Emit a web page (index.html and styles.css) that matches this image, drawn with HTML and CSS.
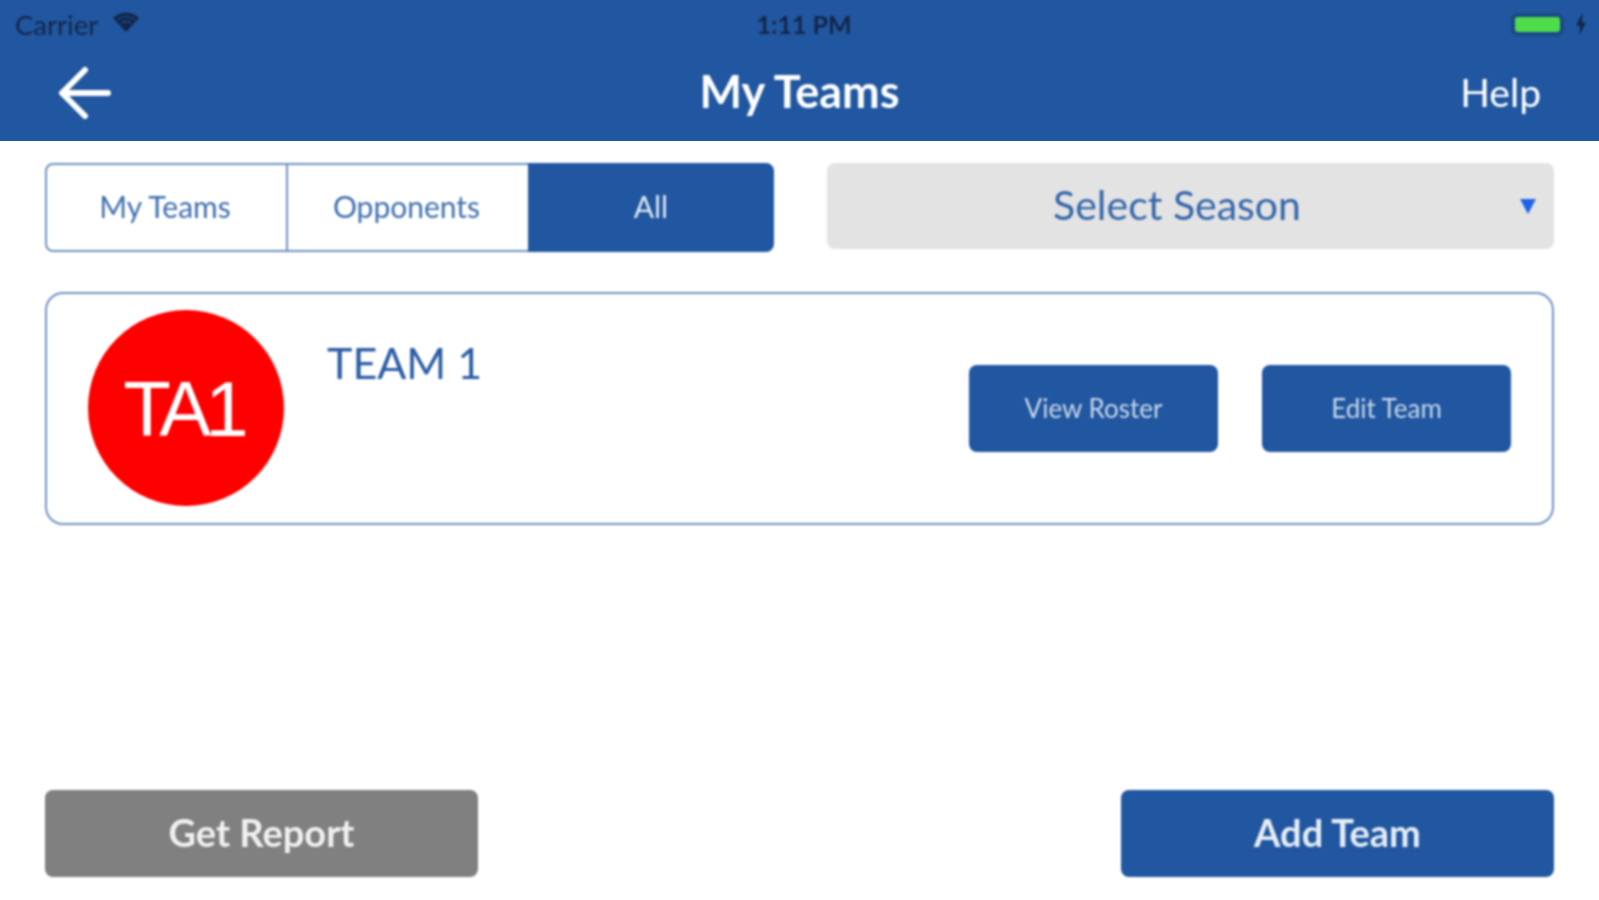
FILE: index.html
```html
<!DOCTYPE html>
<html lang="en">
<head>
    <meta charset="UTF-8">
    <meta name="viewport" content="width=device-width, initial-scale=1.0">
    <title>My Teams</title>
    <link rel="stylesheet" href="styles.css">
</head>
<body>
    <header class="top-bar">
        <div class="status-bar">
            <div class="status-left">
                <span>Carrier</span>
                <svg class="wifi" width="28" height="24" viewBox="0 0 28 24">
                    <path d="M14 22 L1 8 C8 1 20 1 27 8 Z" fill="#13264a"/>
                    <path d="M5.5 9.5 C10.5 5.5 17.5 5.5 22.5 9.5 M9 13.5 C12 11 16 11 19 13.5" fill="none" stroke="#1f4e92" stroke-width="1.2"/>
                </svg>
            </div>
            <span class="status-time">1:11 PM</span>
            <div class="status-right">
                <div class="battery"><div class="battery-fill"></div></div>
                <svg class="bolt" width="12" height="22" viewBox="0 0 12 22">
                    <path d="M7.5 0 L1 12.5 H5 L4.5 22 L11 9.5 H7 Z" fill="#13264a"/>
                </svg>
            </div>
        </div>
        <nav class="nav-bar">
            <svg class="back" width="54" height="54" viewBox="0 0 54 54">
                <path d="M50 27 H5 M27 4 L4 27 L27 50" fill="none" stroke="#fff" stroke-width="6" stroke-linecap="round" stroke-linejoin="round"/>
            </svg>
            <h1>My Teams</h1>
            <a class="help">Help</a>
        </nav>
    </header>

    <main class="content">
        <div class="filters">
            <div class="segments">
                <button class="segment first">My Teams</button>
                <button class="segment second">Opponents</button>
                <button class="segment active">All</button>
            </div>
            <div class="season">
                <span class="season-label">Select Season</span>
                <span class="season-caret"></span>
            </div>
        </div>

        <section class="team-card">
            <div class="team-badge">TA1</div>
            <h2 class="team-name">TEAM 1</h2>
            <div class="team-actions">
                <button class="small-btn">View Roster</button>
                <button class="small-btn">Edit Team</button>
            </div>
        </section>

        <div class="bottom-actions">
            <button class="big-btn grey">Get Report</button>
            <button class="big-btn">Add Team</button>
        </div>
    </main>
</body>
</html>
```

FILE: styles.css
```css
* {
    box-sizing: border-box;
}
html, body {
    height: 100%;
}
body {
    margin: 0;
    display: flex;
    flex-direction: column;
    background: #fff;
    font-family: Lato, "Open Sans", sans-serif;
    color: #2a5ca4;
    overflow: hidden;
}
button {
    font-family: inherit;
    border: none;
    padding: 0;
}

/* the source shot is an upscaled phone capture, so everything is soft */
.status-bar, .nav-bar, .content {
    filter: blur(1px);
}

/* header */
.top-bar {
    height: 141px;
    background: #2157a0;
    color: #fff;
    flex-shrink: 0;
}
.status-bar {
    height: 50px;
    display: grid;
    grid-template-columns: 1fr auto 1fr;
    align-items: center;
    padding: 0 12px 2px 15px;
    color: #13264a;
    font-size: 27.5px;
}
.status-left {
    display: flex;
    align-items: center;
    gap: 14px;
}
.status-left .wifi {
    margin-top: -4px;
}
.status-time {
    font-size: 25px;
    font-weight: 700;
    margin-left: 6px;
}
.status-right {
    display: flex;
    justify-content: flex-end;
    align-items: center;
    gap: 11px;
}
.battery {
    width: 53px;
    height: 23px;
    padding: 4px;
    background: #1c4887;
    border-radius: 7px;
}
.battery-fill {
    height: 100%;
    background: #4fdc4a;
    border-radius: 3px;
}
.nav-bar {
    height: 90px;
    display: grid;
    grid-template-columns: 1fr auto 1fr;
    align-items: center;
    padding: 0 58px 8px 58px;
}
.nav-bar .back {
    margin-top: 4px;
}
.nav-bar h1 {
    margin: 0;
    font-size: 45px;
    font-weight: 700;
    line-height: 1;
}
.help {
    justify-self: end;
    font-size: 39px;
    margin-top: 2px;
}

/* main area */
.content {
    flex: 1;
    display: flex;
    flex-direction: column;
    padding: 22px 45px 23px;
}
.filters {
    display: flex;
    gap: 53px;
    align-items: flex-start;
}
.segments {
    width: 729px;
    height: 89px;
    display: flex;
}
.segment {
    flex: 1;
    background: #fff;
    color: #3f6fb0;
    font-size: 30px;
    padding: 0 3px 4px 0;
    border: 2px solid #6d92c3;
}
.segment + .segment {
    margin-left: -2px;
}
.segment.first {
    flex: none;
    width: 243px;
    border-radius: 8px 0 0 8px;
}
.segment.second {
    flex: none;
    width: 244px;
}
.segment.active {
    background: #2157a0;
    border-color: #2157a0;
    color: #dfe8f3;
    padding-right: 0;
    border-radius: 0 8px 8px 0;
}
.season {
    flex: 1;
    height: 86px;
    position: relative;
    display: flex;
    align-items: center;
    justify-content: center;
    background: #e3e3e3;
    border-radius: 8px;
    padding: 0 27px 4px 0;
}
.season-label {
    font-size: 41px;
    color: #3566aa;
}
.season-caret {
    position: absolute;
    right: 18px;
    top: 36px;
    border-left: 8px solid transparent;
    border-right: 8px solid transparent;
    border-top: 15px solid #1f62e8;
}

/* team card */
.team-card {
    height: 233px;
    margin-top: 40px;
    display: flex;
    align-items: flex-start;
    border: 2px solid #6d92c3;
    border-radius: 18px;
    padding: 16px 41px 0 41px;
}
.team-badge {
    width: 196px;
    height: 196px;
    border-radius: 50%;
    background: #fe0000;
    color: #fff;
    font-family: "Liberation Sans", Arial, sans-serif;
    font-size: 78px;
    letter-spacing: -6px;
    padding: 3px 6px 0 0;
    display: flex;
    align-items: center;
    justify-content: center;
}
.team-name {
    margin: 31px 0 0 43px;
    font-size: 43px;
    font-weight: 400;
    line-height: 1;
    color: #2a5ca4;
}
.team-actions {
    margin-left: auto;
    margin-top: 55px;
    display: flex;
    gap: 44px;
}
.small-btn {
    width: 249px;
    height: 87px;
    background: #2157a0;
    color: #c9d7ea;
    font-size: 26px;
    padding-bottom: 2px;
    border-radius: 8px;
}

/* bottom buttons */
.bottom-actions {
    margin-top: auto;
    display: flex;
    justify-content: space-between;
}
.big-btn {
    width: 433px;
    height: 87px;
    background: #2157a0;
    color: #e6edf6;
    font-size: 38px;
    font-weight: 700;
    padding-bottom: 4px;
    border-radius: 8px;
}
.big-btn.grey {
    background: #808080;
    color: #f0f0f0;
}
```
